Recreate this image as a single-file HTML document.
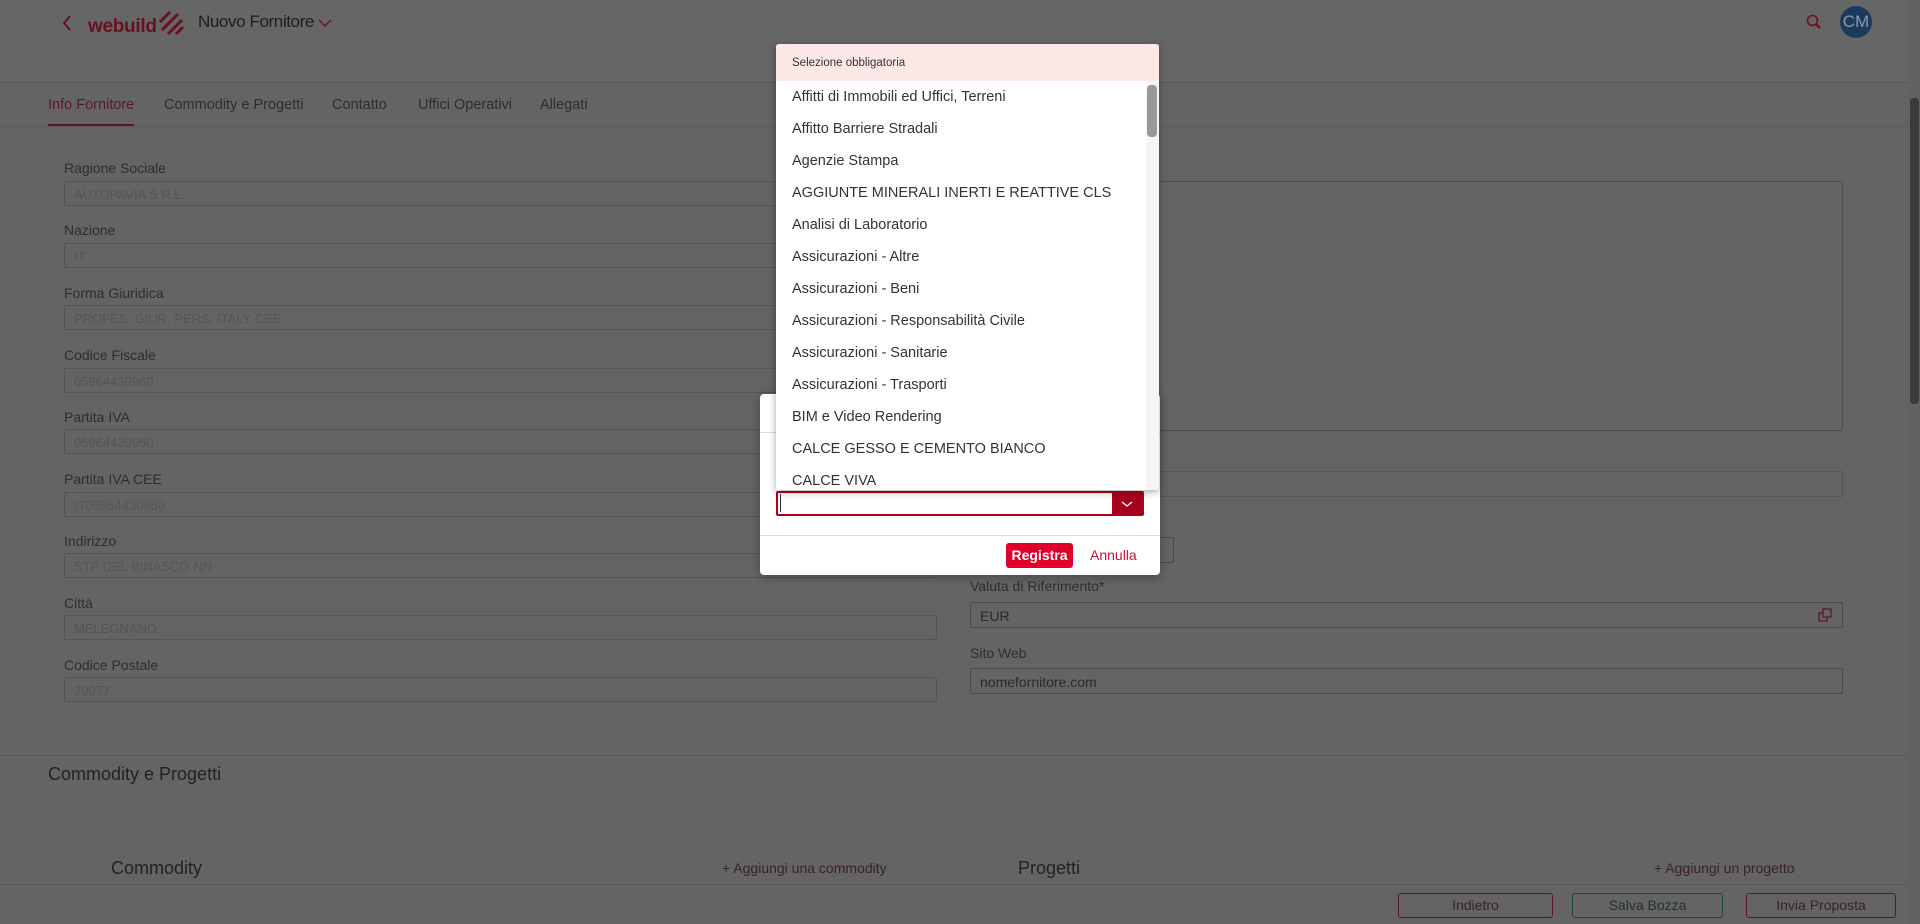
<!DOCTYPE html>
<html><head><meta charset="utf-8"><style>
*{box-sizing:border-box;margin:0;padding:0}
body{width:1920px;height:924px;overflow:hidden;background:#646464;font-family:"Liberation Sans",sans-serif;position:relative;color:#2a2a2a}
.a{position:absolute}
.lbl{position:absolute;left:64px;font-size:14px;color:#2e2e2e}
.fld{position:absolute;left:64px;width:873px;height:25px;border:1px solid #555;border-radius:2px;font-size:13px;color:#555;padding:5px 9px}
.rf{position:absolute;left:970px;width:873px;height:26px;border:1px solid #4a4a4a;border-radius:2px;font-size:14px;color:#2a2a2a;padding:5px 9px}
.tab{position:absolute;top:97px;font-size:14.5px;color:#2e2e2e}
.btn{position:absolute;top:893px;height:25px;border:1px solid #5a1a24;border-radius:3px;font-size:14px;text-align:center;line-height:23px;color:#3a2228}
.it{position:absolute;left:16px;font-size:14.5px;color:#333}
</style></head><body>
<div class="a" style="left:0;top:0;width:1920px;height:83px;background:#666;border-bottom:1px solid #585858"></div>
<svg class="a" style="left:60px;top:14px" width="14" height="18"><path d="M10 2 L4 9 L10 16" stroke="#6a1020" stroke-width="2" fill="none"/></svg>
<div class="a" style="left:88px;top:16px;font-size:19px;font-weight:bold;color:#6a1020;letter-spacing:-0.3px">webuild</div>
<svg class="a" style="left:156px;top:8px" width="30" height="28"><g stroke="#6a1020" stroke-width="3" fill="none"><path d="M4 14 L14 4"/><path d="M6 22 L22 6"/><path d="M12 26 L26 12"/><path d="M20 26 L27 19"/></g></svg>
<div class="a" style="left:198px;top:12px;font-size:17px;letter-spacing:-0.4px;color:#1e1e1e">Nuovo Fornitore</div>
<svg class="a" style="left:318px;top:18px" width="14" height="10"><path d="M1 2 L7 8 L13 2" stroke="#6a1020" stroke-width="1.3" fill="none"/></svg>
<svg class="a" style="left:1806px;top:14px" width="16" height="16"><circle cx="6.5" cy="6.5" r="5" stroke="#6a1020" stroke-width="1.6" fill="none"/><path d="M10 10 L14 14" stroke="#6a1020" stroke-width="2"/></svg>
<div class="a" style="left:1840px;top:6px;width:32px;height:32px;border-radius:50%;background:#1c3a5c;color:#8a9aaa;font-size:17px;text-align:center;line-height:32px">CM</div>

<div class="tab" style="left:48px;color:#5a1a24">Info Fornitore</div>
<div class="a" style="left:48px;top:124px;width:86px;height:2px;background:#5a1a24"></div>
<div class="tab" style="left:164px">Commodity e Progetti</div>
<div class="tab" style="left:332px">Contatto</div>
<div class="tab" style="left:418px">Uffici Operativi</div>
<div class="tab" style="left:540px">Allegati</div>
<div class="a" style="left:0;top:126px;width:1908px;height:1px;background:#5a5a5a"></div>

<div class="lbl" style="top:160px">Ragione Sociale</div><div class="fld" style="top:181px">AUTOPAVIA S.R.L.</div>
<div class="lbl" style="top:222px">Nazione</div><div class="fld" style="top:243px">IT</div>
<div class="lbl" style="top:285px">Forma Giuridica</div><div class="fld" style="top:305px">PROFES. GIUR. PERS. ITALY CEE</div>
<div class="lbl" style="top:347px">Codice Fiscale</div><div class="fld" style="top:368px">05964430960</div>
<div class="lbl" style="top:409px">Partita IVA</div><div class="fld" style="top:429px">05964430960</div>
<div class="lbl" style="top:471px">Partita IVA CEE</div><div class="fld" style="top:492px">IT05964430960</div>
<div class="lbl" style="top:533px">Indirizzo</div><div class="fld" style="top:553px">STP DEL BINASCO NN</div>
<div class="lbl" style="top:595px">Città</div><div class="fld" style="top:615px">MELEGNANO</div>
<div class="lbl" style="top:657px">Codice Postale</div><div class="fld" style="top:677px">20077</div>

<div class="a" style="left:970px;top:181px;width:873px;height:250px;border:1px solid #4e4e4e;border-radius:2px"></div>
<div class="rf" style="top:471px;border-color:#555"></div>
<div class="a" style="left:1120px;top:537px;width:54px;height:26px;border:1px solid #4a4a4a;border-radius:2px"></div>
<div class="a" style="left:970px;top:578px;font-size:14px;color:#2e2e2e">Valuta di Riferimento<span style="color:#6a1020">*</span></div>
<div class="rf" style="top:602px">EUR</div>
<svg class="a" style="left:1818px;top:608px" width="14" height="14"><rect x="1" y="5" width="8" height="8" fill="none" stroke="#5a1a24" stroke-width="1.3"/><rect x="5" y="1" width="8" height="8" fill="#646464" stroke="#5a1a24" stroke-width="1.3"/></svg>
<div class="a" style="left:970px;top:645px;font-size:14px;color:#2e2e2e">Sito Web</div>
<div class="rf" style="top:668px">nomefornitore.com</div>

<div class="a" style="left:0;top:755px;width:1908px;height:1px;background:#585858"></div>
<div class="a" style="left:48px;top:764px;font-size:18px;color:#222">Commodity e Progetti</div>
<div class="a" style="left:111px;top:858px;font-size:18px;color:#222">Commodity</div>
<div class="a" style="left:722px;top:860px;font-size:14px;color:#3a2228">+ Aggiungi una commodity</div>
<div class="a" style="left:1018px;top:858px;font-size:18px;color:#222">Progetti</div>
<div class="a" style="left:1654px;top:860px;font-size:14px;color:#3a2228">+ Aggiungi un progetto</div>
<div class="a" style="left:0;top:884px;width:1908px;height:40px;background:#646464;border-top:1px solid #585858"></div>
<div class="btn" style="left:1398px;width:155px">Indietro</div>
<div class="btn" style="left:1572px;width:151px;border-color:#1e4a30;color:#1e3828">Salva Bozza</div>
<div class="btn" style="left:1746px;width:150px">Invia Proposta</div>
<div class="a" style="left:1908px;top:0;width:12px;height:924px;background:#626262"></div>
<div class="a" style="left:1910px;top:98px;width:9px;height:306px;background:#3a3a3a;border-radius:4px"></div>

<div class="a" style="left:760px;top:394px;width:400px;height:181px;background:#fff;border-radius:4px;box-shadow:0 2px 10px rgba(0,0,0,.3)">
  <div class="a" style="left:0;top:38px;width:400px;height:1px;background:#ddd"></div>
  <div class="a" style="left:16px;top:97px;width:368px;height:25px;border:2px solid #b0001e;border-radius:2px">
    <div class="a" style="left:2px;top:1px;width:1px;height:18px;background:#333"></div>
    <div class="a" style="right:0;top:0;width:30px;height:21px;background:#a8001c"><svg width="30" height="21"><path d="M10 9 L15 13 L20 9" stroke="#fff" stroke-width="1.4" fill="none"/></svg></div>
  </div>
  <div class="a" style="left:0;top:141px;width:400px;height:1px;background:#ddd"></div>
  <div class="a" style="left:246px;top:149px;width:67px;height:25px;background:#e0002a;border-radius:3px;color:#fff;font-weight:bold;font-size:14px;text-align:center;line-height:25px">Registra</div>
  <div class="a" style="left:330px;top:153px;color:#c0103a;font-size:14px">Annulla</div>
</div>

<div class="a" style="left:776px;top:44px;width:383px;height:446px;background:#fff;border-radius:3px;box-shadow:0 2px 8px rgba(0,0,0,.35);overflow:hidden">
  <div class="a" style="left:0;top:0;width:383px;height:37px;background:#fde8e8"></div>
  <div class="a" style="left:16px;top:13px;font-size:11.5px;color:#333">Selezione obbligatoria</div>
  <div class="a" style="left:370px;top:37px;width:13px;height:409px;background:#f5f5f5"></div>
  <div class="a" style="left:371px;top:41px;width:10px;height:52px;background:#999;border-radius:4px"></div>
  <div class="it" style="top:45px">Affitti di Immobili ed Uffici, Terreni</div>
  <div class="it" style="top:77px">Affitto Barriere Stradali</div>
  <div class="it" style="top:109px">Agenzie Stampa</div>
  <div class="it" style="top:141px">AGGIUNTE MINERALI INERTI E REATTIVE CLS</div>
  <div class="it" style="top:173px">Analisi di Laboratorio</div>
  <div class="it" style="top:205px">Assicurazioni - Altre</div>
  <div class="it" style="top:237px">Assicurazioni - Beni</div>
  <div class="it" style="top:269px">Assicurazioni - Responsabilità Civile</div>
  <div class="it" style="top:301px">Assicurazioni - Sanitarie</div>
  <div class="it" style="top:333px">Assicurazioni - Trasporti</div>
  <div class="it" style="top:365px">BIM e Video Rendering</div>
  <div class="it" style="top:397px">CALCE GESSO E CEMENTO BIANCO</div>
  <div class="it" style="top:429px">CALCE VIVA</div>
</div>
</body></html>
